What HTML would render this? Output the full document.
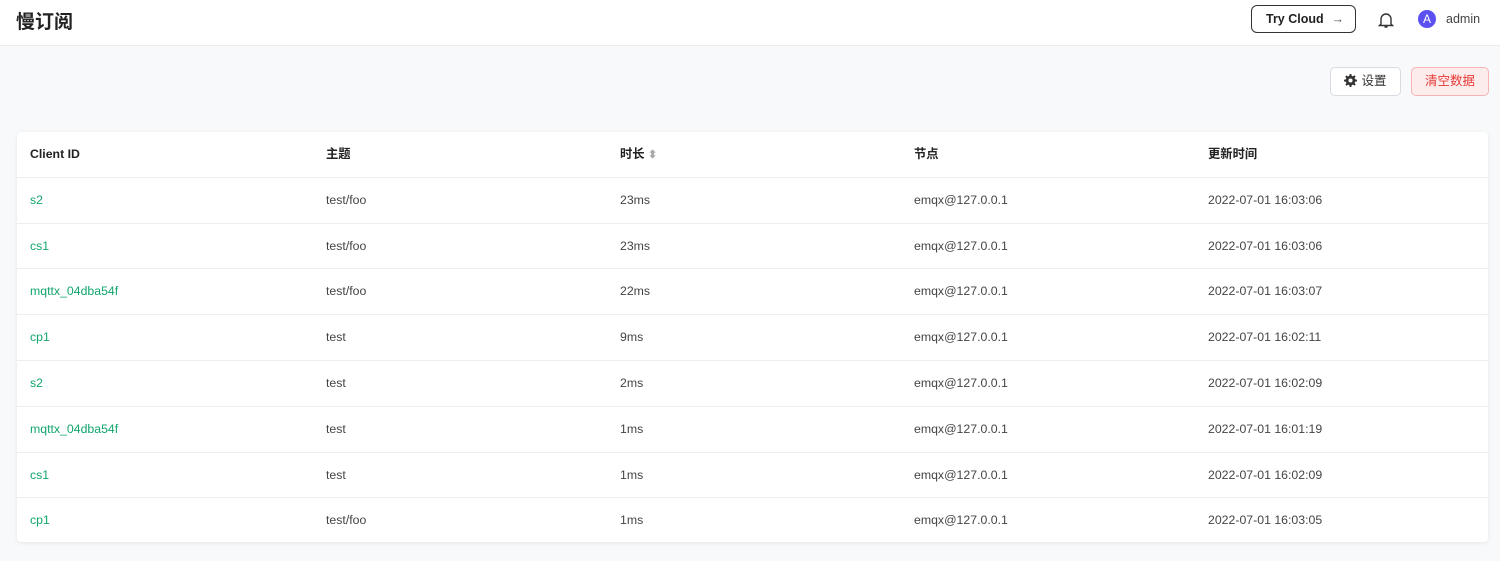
<!DOCTYPE html>
<html><head><meta charset="utf-8"><style>
*{box-sizing:border-box;margin:0;padding:0}
body{width:1500px;height:561px;background:#f7f9fb;font-family:"Liberation Sans","Noto Sans CJK SC",sans-serif;color:#333;overflow:hidden;position:relative}
.hdr{position:absolute;left:0;top:0;width:1500px;height:46px;background:#fff;border-bottom:1px solid #e8ebee}
.title{position:absolute;left:16px;top:7px;font-size:19px;font-weight:bold;color:#222}
.try{position:absolute;left:1251px;top:5px;width:105px;height:28px;border:1px solid #333;border-radius:6px;font-size:12.5px;font-weight:bold;color:#222;line-height:26px;padding-left:14px}
.try span{font-weight:normal;margin-left:8px;color:#555}
.bell{position:absolute;left:1378px;top:11px}
.av{position:absolute;left:1418px;top:10px;width:18px;height:18px;border-radius:50%;background:#5b50f0;color:#fff;font-size:12px;text-align:center;line-height:18px}
.adm{position:absolute;left:1446px;top:12px;font-size:12.5px;color:#444}
.btn{position:absolute;top:67px;height:29px;border-radius:5px;font-size:12.5px;line-height:27px;text-align:center}
.set{left:1330px;width:71px;border:1px solid #d8dce0;background:#fff;color:#333}
.clr{left:1411px;width:78px;border:1px solid #f5b5b5;background:#fdecec;color:#e53935}
.tbl{position:absolute;left:17px;top:132px;width:1471px;height:410px;background:#fff;border-radius:4px;box-shadow:0 1px 4px rgba(0,0,0,.08)}
.row{position:absolute;left:0;width:1471px;height:45.8px;border-bottom:1px solid #eceef0;font-size:12.3px;color:#444}
.row div{position:absolute;top:0;line-height:44px;height:44px;white-space:nowrap}
.h div{font-weight:bold;color:#222}
.g{color:#12a66b}
</style></head><body>
<div class="hdr">
<div class="title">慢订阅</div>
<div class="try">Try Cloud<span>→</span></div>
<svg class="bell" width="16" height="18" viewBox="0 0 16 18"><path d="M3 13V8a5 5 0 0 1 10 0v5l1.5 1.5h-13z M6.5 16h3" fill="none" stroke="#333" stroke-width="1.4"/></svg>
<div class="av">A</div><div class="adm">admin</div>
</div>
<div class="btn set"><svg width="13" height="13" viewBox="0 0 16 16" style="vertical-align:-2px;margin-right:4px"><path fill="#333" d="M7 0h2l.4 2.2 1.6.7 1.9-1.3 1.4 1.4-1.3 1.9.7 1.6L16 7v2l-2.2.4-.7 1.6 1.3 1.9-1.4 1.4-1.9-1.3-1.6.7L9 16H7l-.4-2.2-1.6-.7-1.9 1.3-1.4-1.4 1.3-1.9-.7-1.6L0 9V7l2.2-.4.7-1.6-1.3-1.9 1.4-1.4 1.9 1.3 1.6-.7zM8 5.5a2.5 2.5 0 1 0 0 5 2.5 2.5 0 0 0 0-5z"/></svg>设置</div>
<div class="btn clr">清空数据</div>
<div class="tbl">
<div class="row h" style="top:0"><div style="left:13px">Client ID</div><div style="left:309px">主题</div><div style="left:603px">时长 <span style="color:#aaa;font-size:11px">⬍</span></div><div style="left:897px">节点</div><div style="left:1191px">更新时间</div></div>
<div class="row" style="top:45.8px"><div class="g" style="left:13px">s2</div><div style="left:309px">test/foo</div><div style="left:603px">23ms</div><div style="left:897px">emqx@127.0.0.1</div><div style="left:1191px">2022-07-01 16:03:06</div></div>
<div class="row" style="top:91.6px"><div class="g" style="left:13px">cs1</div><div style="left:309px">test/foo</div><div style="left:603px">23ms</div><div style="left:897px">emqx@127.0.0.1</div><div style="left:1191px">2022-07-01 16:03:06</div></div>
<div class="row" style="top:137.4px"><div class="g" style="left:13px">mqttx_04dba54f</div><div style="left:309px">test/foo</div><div style="left:603px">22ms</div><div style="left:897px">emqx@127.0.0.1</div><div style="left:1191px">2022-07-01 16:03:07</div></div>
<div class="row" style="top:183.2px"><div class="g" style="left:13px">cp1</div><div style="left:309px">test</div><div style="left:603px">9ms</div><div style="left:897px">emqx@127.0.0.1</div><div style="left:1191px">2022-07-01 16:02:11</div></div>
<div class="row" style="top:229px"><div class="g" style="left:13px">s2</div><div style="left:309px">test</div><div style="left:603px">2ms</div><div style="left:897px">emqx@127.0.0.1</div><div style="left:1191px">2022-07-01 16:02:09</div></div>
<div class="row" style="top:274.8px"><div class="g" style="left:13px">mqttx_04dba54f</div><div style="left:309px">test</div><div style="left:603px">1ms</div><div style="left:897px">emqx@127.0.0.1</div><div style="left:1191px">2022-07-01 16:01:19</div></div>
<div class="row" style="top:320.6px"><div class="g" style="left:13px">cs1</div><div style="left:309px">test</div><div style="left:603px">1ms</div><div style="left:897px">emqx@127.0.0.1</div><div style="left:1191px">2022-07-01 16:02:09</div></div>
<div class="row" style="top:366.4px;border-bottom:none"><div class="g" style="left:13px">cp1</div><div style="left:309px">test/foo</div><div style="left:603px">1ms</div><div style="left:897px">emqx@127.0.0.1</div><div style="left:1191px">2022-07-01 16:03:05</div></div>
</div>
</body></html>
